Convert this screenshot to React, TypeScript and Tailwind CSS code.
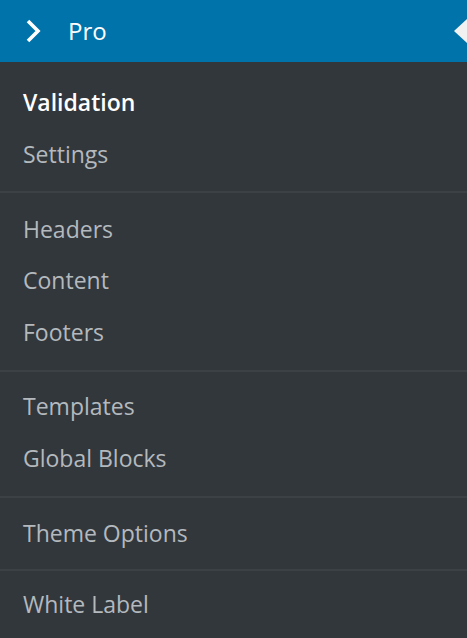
import React from "react";

const groups: { label: string; current?: boolean }[][] = [
  [{ label: "Validation", current: true }, { label: "Settings" }],
  [{ label: "Headers" }, { label: "Content" }, { label: "Footers" }],
  [{ label: "Templates" }, { label: "Global Blocks" }],
  [{ label: "Theme Options" }],
  [{ label: "White Label" }],
];

// padding per group, tuned so rows line up with the dividers
const groupClass = [
  "pt-[14px] pb-[11px] border-b-2 border-[#3c4146]",
  "pt-[10px] pb-[12px] border-b-2 border-[#3c4146]",
  "pt-[9px] pb-[12px] border-b-2 border-[#3c4146]",
  "pt-[10px] pb-[10px] border-b-2 border-[#3c4146]",
  "pt-[7px] pb-[10px]",
];

const App: React.FC = () => {
  return (
    <div
      className="w-[467px] h-[638px] overflow-hidden bg-[#32373c]"
      style={{ fontFamily: '"Open Sans", "Noto Sans", sans-serif' }}
    >
      {/* Top level menu item */}
      <div className="h-[62px] bg-[#0073aa] flex items-center">
        <svg width="20" height="28" viewBox="0 0 20 28" className="ml-[24px]">
          <polyline
            points="4,4 14,14 4,24"
            fill="none"
            stroke="#fff"
            strokeWidth="3.6"
          />
        </svg>
        <span className="ml-[24px] text-[24px] text-white leading-none">Pro</span>
        <div className="ml-auto w-0 h-0 border-y-[12px] border-y-transparent border-r-[13px] border-r-[#f1f1f1]" />
      </div>

      {/* Submenu */}
      <div>
        {groups.map((items, gi) => (
          <div key={gi} className={groupClass[gi]}>
            {items.map((item) => (
              <div
                key={item.label}
                className={
                  item.current
                    ? "h-[52px] flex items-center pl-[23px] text-[23px] font-semibold text-white"
                    : gi === 0
                    ? "h-[52px] flex items-center pl-[23px] text-[23px] text-[#b4b9be]"
                    : "h-[51.5px] flex items-center pl-[23px] text-[23px] text-[#b4b9be]"
                }
              >
                {item.label}
              </div>
            ))}
          </div>
        ))}
      </div>
    </div>
  );
};

export default App;
